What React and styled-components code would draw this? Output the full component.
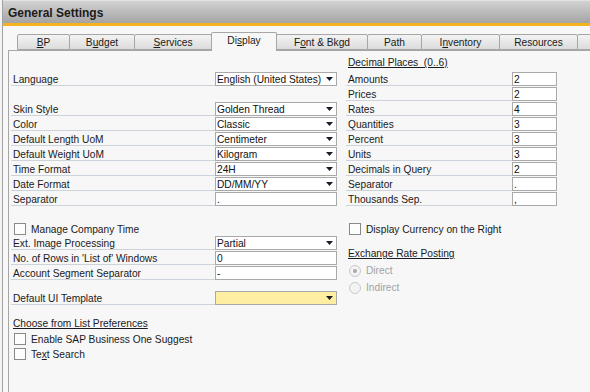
import React from "react";
import styled, { createGlobalStyle } from "styled-components";

const FONT = `"Liberation Sans", Arial, sans-serif`;

const GlobalStyle = createGlobalStyle`
  html, body {
    margin: 0;
    padding: 0;
    width: 590px;
    height: 392px;
    overflow: hidden;
    background: #f3f3f3;
    font-family: ${FONT};
  }
  #root { width: 590px; height: 392px; }
`;

const Window = styled.div`
  margin-left: 2px;
  height: 392px;
  border-left: 1px solid #a3a3a3;
  background: #f7f7f7;
  display: flex;
  flex-direction: column;
  overflow: hidden;
`;

const TitleBar = styled.div`
  height: 23px;
  box-sizing: border-box;
  border-top: 1px solid #e2e2e2;
  background: linear-gradient(#d2d2d2, #a4a4a4);
  display: flex;
  align-items: center;
  padding-left: 5px;
`;

const Title = styled.span`
  font-weight: bold;
  font-size: 12px;
  color: #1b1b1b;
  padding-top: 1px;
`;

const Accent = styled.div`
  height: 3px;
  background: #f5b21c;
`;

const TabStrip = styled.div`
  height: 24px;
  box-sizing: border-box;
  display: flex;
  align-items: flex-end;
  padding-left: 14px;
  position: relative;
  z-index: 1;
`;

const Tab = styled.div`
  flex: none;
  width: ${(p) => p.$w}px;
  height: ${(p) => (p.$active ? 19 : 16)}px;
  margin-left: -1px;
  margin-bottom: ${(p) => (p.$active ? -1 : 0)}px;
  box-sizing: border-box;
  border: 1px solid #a6a6a6;
  border-bottom: ${(p) => (p.$active ? "none" : "1px solid #a6a6a6")};
  border-radius: 2px 2px 0 0;
  background: ${(p) =>
    p.$active ? "#f7f7f7" : "linear-gradient(#f3f3f3, #dcdcdc)"};
  display: flex;
  justify-content: center;
  align-items: ${(p) => (p.$active ? "flex-start" : "center")};
  padding-top: ${(p) => (p.$active ? 2 : 0)}px;
  font-size: 10.2px;
  color: #1a1a1a;
  white-space: nowrap;
  &:first-child { margin-left: 0; }
`;

const U = styled.span`
  text-decoration: underline;
`;

const Panel = styled.div`
  flex: 1;
  margin-left: 5px;
  border-left: 1px solid #a6a6a6;
  border-top: 1px solid #a6a6a6;
  background: #f7f7f7;
  padding: 5px 0 0 2px;
  display: flex;
  gap: 9px;
`;

const Column = styled.div`
  width: ${(p) => p.$w}px;
  display: flex;
  flex-direction: column;
`;

const Spacer = styled.div`
  height: ${(p) => p.$h}px;
  flex: none;
`;

const FieldRow = styled.div`
  display: flex;
  height: 15px;
  flex: none;
`;

const Label = styled.div`
  width: ${(p) => p.$w}px;
  height: 15px;
  box-sizing: border-box;
  border-bottom: 1px solid #cdd3da;
  padding: 3px 0 0 2px;
  line-height: 11px;
  font-size: 10.2px;
  color: #1a1a22;
  white-space: nowrap;
`;

const Box = styled.div`
  width: ${(p) => p.$w}px;
  height: 14px;
  margin-top: 1px;
  box-sizing: border-box;
  border: 1px solid #a9a9a9;
  background: ${(p) => (p.$yellow ? "#fdeea2" : "#ffffff")};
  display: flex;
  align-items: center;
  justify-content: space-between;
  padding: 1px 3px 0 1px;
  font-size: 10.2px;
  line-height: 12px;
  color: #111;
  white-space: nowrap;
  overflow: hidden;
`;

const ArrowSvg = styled.svg`
  flex: none;
  margin-top: -1px;
`;

const Arrow = () => (
  <ArrowSvg width="7" height="4" viewBox="0 0 7 4">
    <polygon points="0,0 7,0 3.5,4" fill="#1b1b2c" />
  </ArrowSvg>
);

const Combo = ({ w, value, yellow }) => (
  <Box $w={w} $yellow={yellow}>
    <span>{value}</span>
    <Arrow />
  </Box>
);

const CheckRow = styled.div`
  display: flex;
  align-items: flex-start;
  height: ${(p) => p.$h || 15}px;
  flex: none;
  padding-left: 3px;
`;

const CheckBox = styled.div`
  width: 12px;
  height: 12px;
  box-sizing: border-box;
  margin-top: ${(p) => p.$mt || 2}px;
  border: 1px solid #8a8a8a;
  background: #fdfdfd;
  flex: none;
`;

const CheckText = styled.span`
  margin-left: 5px;
  font-size: 10.2px;
  line-height: 11px;
  padding-top: ${(p) => p.$pt || 3}px;
  color: #1a1a22;
  white-space: nowrap;
`;

const Heading = styled.div`
  height: 15px;
  flex: none;
  box-sizing: border-box;
  padding: ${(p) => p.$pt}px 0 0 2px;
  line-height: 11px;
  font-size: 10.2px;
  color: #1a1a22;
  text-decoration: underline;
  white-space: pre;
`;

const RadioRow = styled.div`
  height: 17px;
  flex: none;
  display: flex;
  align-items: center;
  padding-left: 3px;
`;

const Radio = styled.div`
  width: 12px;
  height: 12px;
  box-sizing: border-box;
  border-radius: 50%;
  border: 1px solid #c9c9c9;
  background: #f3f3f3;
  display: flex;
  align-items: center;
  justify-content: center;
  flex: none;
`;

const RadioDot = styled.div`
  width: 4px;
  height: 4px;
  border-radius: 50%;
  background: #a9a9a9;
`;

const RadioText = styled.span`
  margin-left: 5px;
  font-size: 10.2px;
  color: #a2a2a2;
  line-height: 17px;
`;

const tabs = [
  { w: 53, label: <><U>B</U>P</> },
  { w: 66, label: <>B<U>u</U>dget</> },
  { w: 78, label: <><U>S</U>ervices</> },
  { w: 66, label: <>Di<U>s</U>play</>, active: true },
  { w: 92, label: <>F<U>o</U>nt &amp; Bkgd</> },
  { w: 55, label: <>Path</> },
  { w: 79, label: <>I<U>n</U>ventory</> },
  { w: 79, label: <>Resources</> },
  { w: 30, label: null },
];

const LW = 204;
const CW = 122;
const RLW = 166;
const RCW = 45;

const leftTop = [
  ["Skin Style", "Golden Thread"],
  ["Color", "Classic"],
  ["Default Length UoM", "Centimeter"],
  ["Default Weight UoM", "Kilogram"],
  ["Time Format", "24H"],
  ["Date Format", "DD/MM/YY"],
];

const decimals = [
  ["Amounts", "2"],
  ["Prices", "2"],
  ["Rates", "4"],
  ["Quantities", "3"],
  ["Percent", "3"],
  ["Units", "3"],
  ["Decimals in Query", "2"],
  ["Separator", "."],
  ["Thousands Sep.", ","],
];

export default function App() {
  return (
    <>
      <GlobalStyle />
      <Window>
        <TitleBar>
          <Title>General Settings</Title>
        </TitleBar>
        <Accent />
        <TabStrip>
          {tabs.map((t, i) => (
            <Tab key={i} $w={t.w} $active={t.active}>
              {t.label}
            </Tab>
          ))}
        </TabStrip>
        <Panel>
          <Column $w={326}>
            <Spacer $h={15} />
            <FieldRow>
              <Label $w={LW}>Language</Label>
              <Combo w={CW} value="English (United States)" />
            </FieldRow>
            <Spacer $h={15} />
            {leftTop.map(([l, v]) => (
              <FieldRow key={l}>
                <Label $w={LW}>{l}</Label>
                <Combo w={CW} value={v} />
              </FieldRow>
            ))}
            <FieldRow>
              <Label $w={LW}>Separator</Label>
              <Box $w={CW}>.</Box>
            </FieldRow>
            <Spacer $h={15} />
            <CheckRow $h={14}>
              <CheckBox />
              <CheckText>Manage Company Time</CheckText>
            </CheckRow>
            <FieldRow>
              <Label $w={LW}>Ext. Image Processing</Label>
              <Combo w={CW} value="Partial" />
            </FieldRow>
            <FieldRow>
              <Label $w={LW}>No. of Rows in 'List of' Windows</Label>
              <Box $w={CW}>0</Box>
            </FieldRow>
            <FieldRow>
              <Label $w={LW}>Account Segment Separator</Label>
              <Box $w={CW}>-</Box>
            </FieldRow>
            <Spacer $h={10} />
            <FieldRow>
              <Label $w={LW}>Default UI Template</Label>
              <Combo w={CW} value="" yellow />
            </FieldRow>
            <Spacer $h={10} />
            <Heading $pt={3}>Choose from List Preferences</Heading>
            <CheckRow>
              <CheckBox $mt={3} />
              <CheckText $pt={4}>Enable SAP Business One Suggest</CheckText>
            </CheckRow>
            <CheckRow>
              <CheckBox $mt={3} />
              <CheckText $pt={4}>Te<U>x</U>t Search</CheckText>
            </CheckRow>
          </Column>
          <Column $w={211}>
            <Heading $pt={1}>Decimal Places  (0..6)</Heading>
            {decimals.map(([l, v]) => (
              <FieldRow key={l}>
                <Label $w={RLW}>{l}</Label>
                <Box $w={RCW}>{v}</Box>
              </FieldRow>
            ))}
            <Spacer $h={15} />
            <CheckRow $h={14}>
              <CheckBox />
              <CheckText>Display Currency on the Right</CheckText>
            </CheckRow>
            <Spacer $h={10} />
            <Heading $pt={3}>Exchange Rate Posting</Heading>
            <Spacer $h={2} />
            <RadioRow>
              <Radio>
                <RadioDot />
              </Radio>
              <RadioText>Direct</RadioText>
            </RadioRow>
            <RadioRow>
              <Radio />
              <RadioText>Indirect</RadioText>
            </RadioRow>
          </Column>
        </Panel>
      </Window>
    </>
  );
}
